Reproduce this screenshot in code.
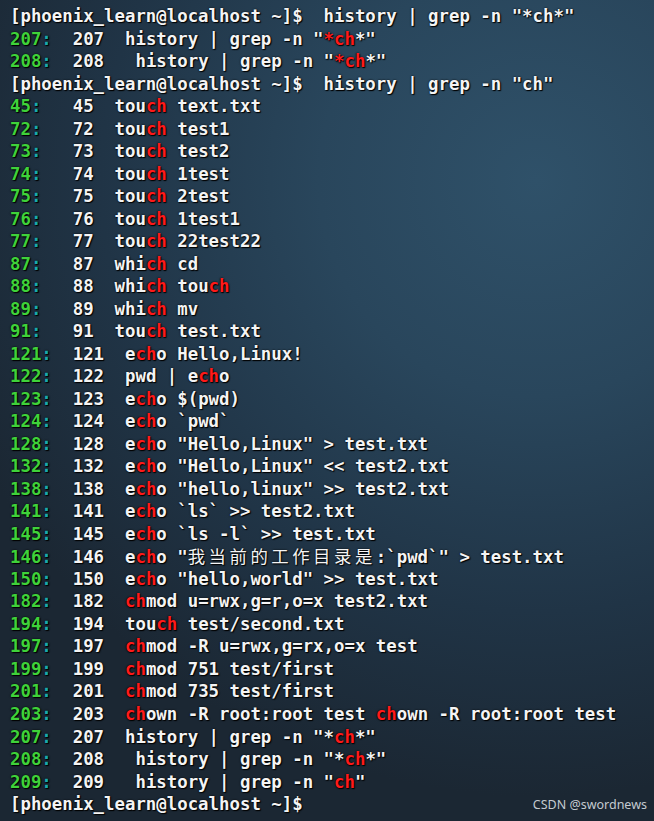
import React from "react";

type Seg = { t: string; c?: "r" | "cjk" };

const W = (t: string): Seg => ({ t });
const R = (t: string): Seg => ({ t, c: "r" });
const C = (t: string): Seg => ({ t, c: "cjk" });

type Line =
  | { kind: "prompt"; cmd: string }
  | { kind: "hit"; n: string; segs: Seg[] };

const h = (n: string, ...segs: Seg[]): Line => ({ kind: "hit", n, segs });

const lines: Line[] = [
  { kind: "prompt", cmd: '  history | grep -n "*ch*"' },
  h("207", W('history | grep -n "'), R("*ch"), W('*"')),
  h("208", W(' history | grep -n "'), R("*ch"), W('*"')),
  { kind: "prompt", cmd: '  history | grep -n "ch"' },
  h("45", W("tou"), R("ch"), W(" text.txt")),
  h("72", W("tou"), R("ch"), W(" test1")),
  h("73", W("tou"), R("ch"), W(" test2")),
  h("74", W("tou"), R("ch"), W(" 1test")),
  h("75", W("tou"), R("ch"), W(" 2test")),
  h("76", W("tou"), R("ch"), W(" 1test1")),
  h("77", W("tou"), R("ch"), W(" 22test22")),
  h("87", W("whi"), R("ch"), W(" cd")),
  h("88", W("whi"), R("ch"), W(" tou"), R("ch")),
  h("89", W("whi"), R("ch"), W(" mv")),
  h("91", W("tou"), R("ch"), W(" test.txt")),
  h("121", W("e"), R("ch"), W("o Hello,Linux!")),
  h("122", W("pwd | e"), R("ch"), W("o")),
  h("123", W("e"), R("ch"), W("o $(pwd)")),
  h("124", W("e"), R("ch"), W("o `pwd`")),
  h("128", W("e"), R("ch"), W('o "Hello,Linux" > test.txt')),
  h("132", W("e"), R("ch"), W('o "Hello,Linux" << test2.txt')),
  h("138", W("e"), R("ch"), W('o "hello,linux" >> test2.txt')),
  h("141", W("e"), R("ch"), W("o `ls` >> test2.txt")),
  h("145", W("e"), R("ch"), W("o `ls -l` >> test.txt")),
  h("146", W("e"), R("ch"), W('o "'), C("我当前的工作目录是"), W(':`pwd`" > test.txt')),
  h("150", W("e"), R("ch"), W('o "hello,world" >> test.txt')),
  h("182", R("ch"), W("mod u=rwx,g=r,o=x test2.txt")),
  h("194", W("tou"), R("ch"), W(" test/second.txt")),
  h("197", R("ch"), W("mod -R u=rwx,g=rx,o=x test")),
  h("199", R("ch"), W("mod 751 test/first")),
  h("201", R("ch"), W("mod 735 test/first")),
  h("203", R("ch"), W("own -R root:root test "), R("ch"), W("own -R root:root test")),
  h("207", W('history | grep -n "*'), R("ch"), W('*"')),
  h("208", W(' history | grep -n "*'), R("ch"), W('*"')),
  h("209", W(' history | grep -n "'), R("ch"), W('"')),
  { kind: "prompt", cmd: "" },
];

function pad5(n: string) {
  return " ".repeat(5 - n.length) + n;
}

export default function App() {
  return (
    <div className="relative w-[654px] h-[821px] overflow-hidden bg-[radial-gradient(ellipse_95%_75%_at_82%_22%,#2f5169_0%,#29465c_35%,#203446_70%,#1b2733_100%)]">
      <div
        className="pl-[10px] pt-[5px] whitespace-pre font-bold text-[17.36px] leading-[22.52px] text-[#f4f4f4] [text-shadow:1px_1px_1px_#000,0_0_2px_#000]"
        style={{ fontFamily: '"DejaVu Sans Mono", "Liberation Mono", monospace' }}
      >
        {lines.map((l, i) => (
          <div key={i} className="h-[22.52px]">
            {l.kind === "prompt" ? (
              <span>{"[phoenix_learn@localhost ~]$" + l.cmd}</span>
            ) : (
              <>
                <span className="text-[#3fd23a]">{l.n}</span>
                <span className="text-[#19a9ad]">:</span>
                <span>{pad5(l.n) + "  "}</span>
                {l.segs.map((s, j) =>
                  s.c === "r" ? (
                    <span key={j} className="text-[#ff1a1a]">
                      {s.t}
                    </span>
                  ) : s.c === "cjk" ? (
                    <span
                      key={j}
                      className="font-normal tracking-[3.54px] text-[17.36px]"
                      style={{ fontFamily: '"Noto Sans CJK SC", sans-serif' }}
                    >
                      {s.t}
                    </span>
                  ) : (
                    <span key={j}>{s.t}</span>
                  )
                )}
              </>
            )}
          </div>
        ))}
      </div>
      <div
        className="absolute right-[7px] bottom-[10px] text-[12.5px] leading-none text-[#c4cad0]"
        style={{ fontFamily: '"Noto Sans", "DejaVu Sans", sans-serif' }}
      >
        CSDN @swordnews
      </div>
    </div>
  );
}
